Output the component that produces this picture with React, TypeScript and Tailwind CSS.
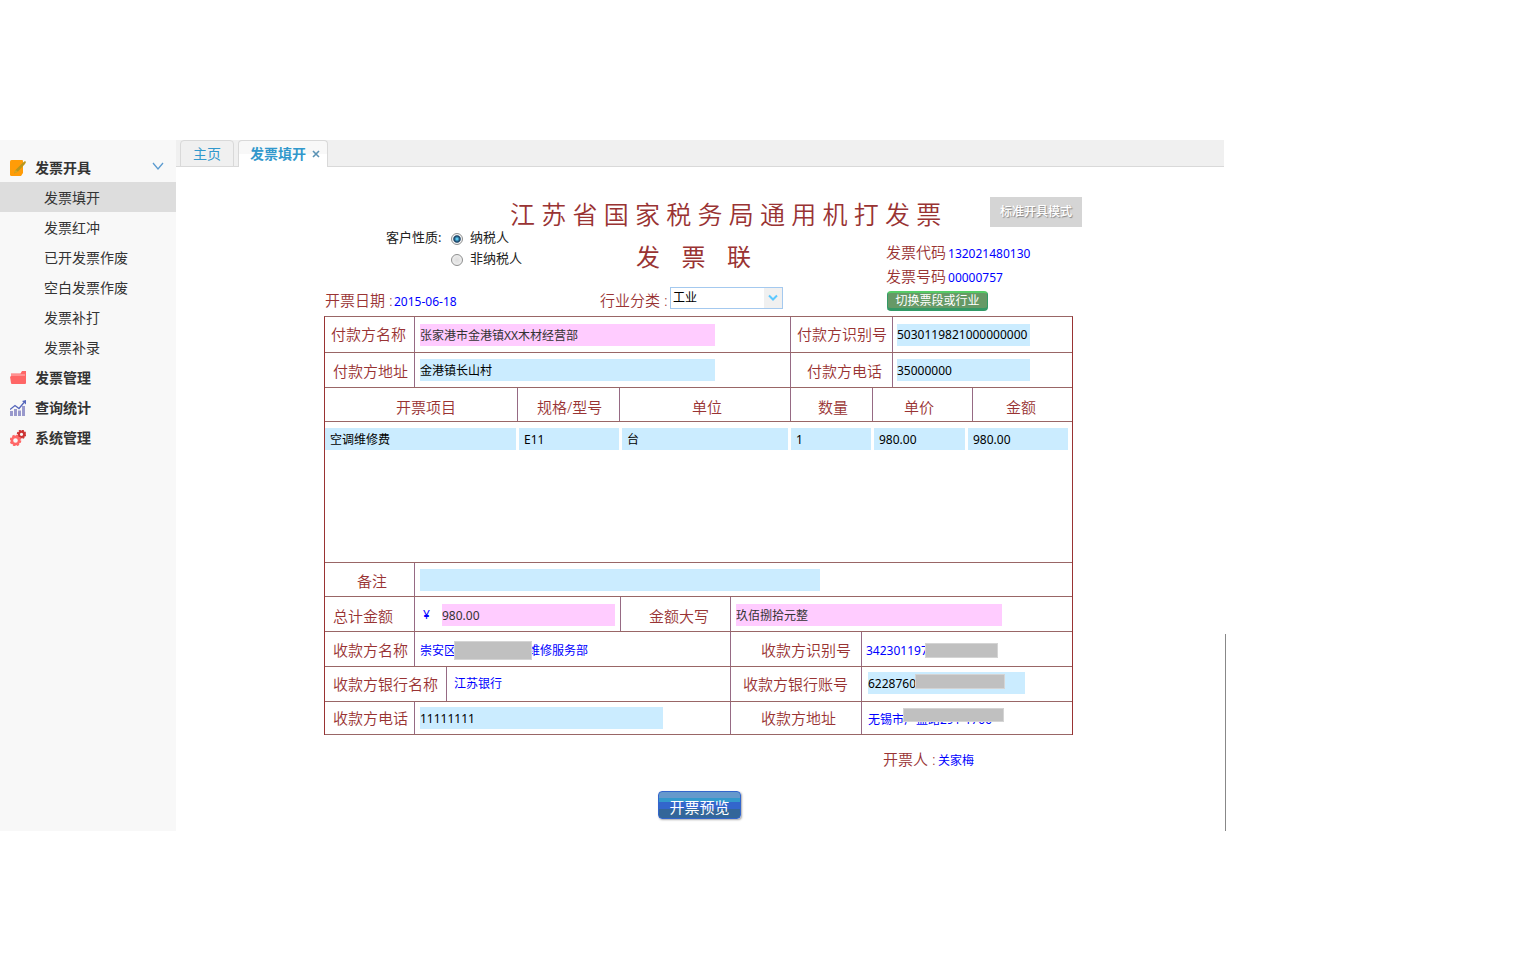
import type { ReactNode } from "react";

type FieldProps = {
  id: string;
  label: string;
  value: string;
  className: string;
  readOnly?: boolean;
};

const subItems = ["发票填开", "发票红冲", "已开发票作废", "空白发票作废", "发票补打", "发票补录"];

const columns = [
  { title: "开票项目", value: "空调维修费", head: "w-[193px] pl-[71px]", body: "w-[191px]" },
  { title: "规格/型号", value: "E11", head: "w-[102px] pl-[19px]", body: "w-[100px]" },
  { title: "单位", value: "台", head: "w-[171px] pl-[72px]", body: "w-[166px]" },
  { title: "数量", value: "1", head: "w-[82px] pl-[27px]", body: "w-[80px]" },
  { title: "单价", value: "980.00", head: "w-[100px] pl-[31px]", body: "w-[91px]" },
  { title: "金额", value: "980.00", head: "flex-1 border-r-0 pl-[33px]", body: "w-[100px]" },
];

function EditIcon() {
  return (
    <svg className="h-4 w-4" viewBox="0 0 16 16">
      <path d="M0 1.500Q0 0 1.500 0H12q1 0 1 1v12l-2 3H1.500Q0 16 0 14.500Z" fill="#ff9c08" />
      <path d="M4 13.500 5.500 10 13 2.500 15 1l1 1-1 2-7 7.500Z" fill="#b8961c" />
      <path d="m4 13.500 1.500-3.500L8 11.500Z" fill="#d9a520" />
    </svg>
  );
}

function FolderIcon() {
  return (
    <svg className="h-4 w-4" viewBox="0 0 16 16">
      <path d="M1 5V3.500h9.500L12 1h4v6H1Z" fill="#f66" />
      <path d="M1 5h14" stroke="#fbb" strokeWidth="1" />
      <path d="M0 6.500h16V13q0 1-1 1H2q-1 0-1-1Z" fill="#f66" />
    </svg>
  );
}

function ChartIcon() {
  return (
    <svg className="h-4 w-4" viewBox="0 0 16 16">
      <path d="M0 11h3v5H0ZM4 9h3v7H4ZM8 10.500h3V16H8ZM12 6h3v10h-3Z" fill="#99c" />
      <path d="m0 9.500 5-4 4 3 5-6" fill="none" stroke="#56b" strokeWidth="1.300" />
      <path d="M12 1 16 0v4.500Z" fill="#56b" />
    </svg>
  );
}

function GearsIcon() {
  return (
    <svg className="h-4 w-4" viewBox="0 0 16 16" fill="none">
      <circle cx="11.500" cy="4.300" r="2.700" stroke="#c33" strokeWidth="2.200" />
      <circle cx="11.500" cy="4.300" r="4" stroke="#c33" strokeWidth="1.400" strokeDasharray="1.900 1.240" />
      <circle cx="5.500" cy="10.500" r="3.600" fill="#f8f8f8" stroke="#f66" strokeWidth="2.600" />
      <circle cx="5.500" cy="10.500" r="5" stroke="#f66" strokeWidth="1.600" strokeDasharray="2.300 1.630" />
    </svg>
  );
}

function MenuHeading({ icon, children, open }: { icon: ReactNode; children: ReactNode; open?: boolean }) {
  return (
    <button className="flex h-[30px] w-full items-center pt-[2px] pr-3 pl-[10px] text-sm font-bold text-[#333]" type="button">
      {icon}
      <span className="ml-[9px]">{children}</span>
      {open && (
        <svg className="ml-auto h-3 w-3" viewBox="0 0 12 12" fill="none">
          <path d="m1 1 5 6 5-6" stroke="#5b9bd0" strokeWidth="1.300" />
        </svg>
      )}
    </button>
  );
}

function Field({ id, label, value, className, readOnly }: FieldProps) {
  return (
    <input
      aria-label={label}
      className={`h-[22px] text-xs ${readOnly ? "bg-[#fcf] text-[#333]" : "bg-[#cbecff] text-black"} ${className}`}
      defaultValue={value}
      id={id}
      readOnly={readOnly}
      type="text"
    />
  );
}

function Label({ htmlFor, className, children }: { htmlFor?: string; className: string; children: ReactNode }) {
  return (
    <label
      className={`flex shrink-0 items-center border-r border-[#966a84] text-[15px] font-[350] whitespace-nowrap text-[#933] ${className}`}
      htmlFor={htmlFor}
    >
      {children}
    </label>
  );
}

function Cell({ className, children }: { className: string; children: ReactNode }) {
  return <div className={`flex items-center border-[#966a84] text-xs text-[#00f] ${className}`}>{children}</div>;
}

function Row({ className, children }: { className: string; children: ReactNode }) {
  return <div className={`flex border-b border-[#966] ${className}`}>{children}</div>;
}

function Mask({ className }: { className: string }) {
  return <span className={`absolute border border-[#d4d4d4] bg-[#c0c0c0] ${className}`} />;
}

function Sidebar() {
  return (
    <nav className="w-[176px] shrink-0 bg-[#f8f8f8] pt-3">
      <MenuHeading icon={<EditIcon />} open>发票开具</MenuHeading>
      <ul>
        {subItems.map((item, index) => (
          <li key={item}>
            <a
              className={`flex h-[30px] items-center pt-[2px] pl-11 text-sm text-[#333] ${index === 0 ? "bg-[#ddd]" : ""}`}
              href="#"
            >
              {item}
            </a>
          </li>
        ))}
      </ul>
      <MenuHeading icon={<FolderIcon />}>发票管理</MenuHeading>
      <MenuHeading icon={<ChartIcon />}>查询统计</MenuHeading>
      <MenuHeading icon={<GearsIcon />}>系统管理</MenuHeading>
    </nav>
  );
}

function TabBar() {
  return (
    <div className="flex h-[27px] gap-1 border-b border-[#d9d9d9] bg-[#f0f0f0] pl-1 text-sm text-[#3298cc]">
      <button className="h-[27px] w-[54px] rounded-t border border-[#d9d9d9] bg-[#f0f0f0]" type="button">
        主页
      </button>
      <button
        className="flex h-[27px] w-[90px] items-center justify-center gap-[6px] rounded-t border border-b-0 border-[#d9d9d9] bg-linear-to-b from-[#f8f8f8] from-50% to-white to-50% pl-1 font-bold"
        type="button"
      >
        发票填开
        <svg className="h-2 w-2" viewBox="0 0 8 8">
          <path d="m1 1 6 6M7 1 1 7" stroke="#5b93b5" strokeWidth="1.600" />
        </svg>
      </button>
    </div>
  );
}

function CustomerRadio({ label, checked }: { label: string; checked?: boolean }) {
  return (
    <label className="flex h-[21px] items-center gap-[7px]">
      <input
        className="mt-[3px] h-3 w-3 appearance-none rounded-full border border-[#8e8f8f] bg-radial from-[#ddd] to-[#f4f4f4] checked:from-[#5cc8f0] checked:from-10% checked:via-[#123a5c] checked:via-45% checked:to-[#f4f4f4] checked:to-60%"
        defaultChecked={checked}
        name="customer"
        type="radio"
      />
      {label}
    </label>
  );
}

function InvoiceHeader() {
  return (
    <header className="w-[758px]">
      <div className="flex h-[30px] items-center justify-between pl-[186px]">
        <h1 className="mt-2 font-['Liberation_Serif','Noto_Sans_CJK_SC',serif] text-[25px] leading-[30px] font-[350] whitespace-nowrap text-[#933]">
          江 苏 省 国 家 税 务 局 通 用 机 打 发 票
        </h1>
        <button
          className="h-[30px] w-[92px] bg-[#d5d5d5] text-xs font-medium text-white [text-shadow:1px_1px_1px_#888]"
          type="button"
        >
          标准开具模式
        </button>
      </div>
      <div className="flex h-[89px]">
        <div className="w-[562px]">
          <div className="flex h-[60px] pl-[62px] text-[13px] text-[#222]">
            <span className="w-[65px] leading-[21px]">客户性质:</span>
            <div className="w-[185px]">
              <CustomerRadio checked label="纳税人" />
              <CustomerRadio label="非纳税人" />
            </div>
            <h2 className="font-['Noto_Sans_CJK_SC',sans-serif] text-2xl leading-[58px] whitespace-pre text-[#933]">
              发    票    联
            </h2>
          </div>
          <div className="flex">
            <p className="flex w-[276px] items-baseline pl-px leading-[26px] whitespace-nowrap">
              <span className="w-[69px] text-[15px] font-[350] text-[#933]">开票日期 :</span>
              <span className="text-xs text-[#00f]">2015-06-18</span>
            </p>
            <label
              className="w-[70px] text-[15px] leading-[26px] font-[350] whitespace-nowrap text-[#933]"
              htmlFor="industry"
            >
              行业分类 :
            </label>
            <div className="relative h-[22px] w-[113px]">
              <select
                className="block h-full w-full appearance-none border border-[#a4c9ef] bg-white pl-[2px] text-xs text-black"
                defaultValue="工业"
                id="industry"
              >
                <option>工业</option>
              </select>
              <span className="pointer-events-none absolute inset-y-px right-px flex w-[18px] items-center justify-center bg-[#f0f0f0]">
                <svg className="h-2 w-[10px]" viewBox="0 0 10 8" fill="none">
                  <path d="m1 1.500 4 4 4-4" stroke="#5cc8ff" strokeWidth="2" />
                </svg>
              </span>
            </div>
          </div>
        </div>
        <div className="pt-[13px]">
          <p className="flex h-6 items-baseline gap-[2px] leading-6">
            <span className="text-[15px] font-[350] text-[#933]">发票代码</span>
            <span className="text-xs text-[#00f]">132021480130</span>
          </p>
          <p className="flex h-6 items-baseline gap-[2px] leading-6">
            <span className="text-[15px] font-[350] text-[#933]">发票号码</span>
            <span className="text-xs text-[#00f]">00000757</span>
          </p>
          <button
            className="mt-[3px] ml-px block h-5 w-[101px] rounded border border-t-2 border-b-[3px] border-[#396] border-t-[#5c6] bg-[#696] text-xs leading-[15px] text-white"
            type="button"
          >
            切换票段或行业
          </button>
        </div>
      </div>
    </header>
  );
}

function ItemTable() {
  return (
    <table className="block border-b border-[#966]">
      <thead className="block">
        <tr className="flex h-[34px] border-b border-[#966]">
          {columns.map((column) => (
            <th
              className={`border-r border-[#966a84] text-left text-[15px] leading-[38px] font-[350] whitespace-nowrap text-[#933] ${column.head}`}
              key={column.title}
              scope="col"
            >
              {column.title}
            </th>
          ))}
        </tr>
      </thead>
      <tbody className="block h-[140px] pt-[6px]">
        <tr className="flex gap-[3px]">
          {columns.map((column) => (
            <td className={`flex ${column.body}`} key={column.title}>
              <Field className="w-full pl-[5px]" id={`item-${column.title}`} label={column.title} value={column.value} />
            </td>
          ))}
        </tr>
      </tbody>
    </table>
  );
}

function InvoiceForm() {
  return (
    <div className="w-[749px] border-x border-t border-x-[#933] border-t-[#966]">
      <Row className="h-9">
        <Label className="w-[90px] pl-[6px]" htmlFor="payer-name">付款方名称</Label>
        <Cell className="w-[376px] border-r pl-[5px]">
          <Field className="w-[295px]" id="payer-name" label="付款方名称" readOnly value="张家港市金港镇XX木材经营部" />
        </Cell>
        <Label className="w-[102px] pl-[6px]" htmlFor="payer-id">付款方识别号</Label>
        <Cell className="flex-1 pl-1">
          <Field className="w-[133px]" id="payer-id" label="付款方识别号" value="5030119821000000000" />
        </Cell>
      </Row>
      <Row className="h-[35px]">
        <Label className="w-[90px] pt-[2px] pl-2" htmlFor="payer-address">付款方地址</Label>
        <Cell className="w-[376px] border-r pl-[5px]">
          <Field className="w-[295px]" id="payer-address" label="付款方地址" value="金港镇长山村" />
        </Cell>
        <Label className="w-[102px] pt-[2px] pl-4" htmlFor="payer-phone">付款方电话</Label>
        <Cell className="flex-1 pl-1">
          <Field className="w-[133px]" id="payer-phone" label="付款方电话" value="35000000" />
        </Cell>
      </Row>
      <ItemTable />
      <Row className="h-[34px]">
        <Label className="w-[90px] pt-1 pl-8" htmlFor="remark">备注</Label>
        <Cell className="flex-1 pl-[5px]">
          <Field className="w-[400px]" id="remark" label="备注" value="" />
        </Cell>
      </Row>
      <Row className="h-[35px]">
        <Label className="w-[90px] pt-1 pl-2" htmlFor="total">总计金额</Label>
        <Cell className="w-[206px] border-r pt-[2px] pl-2">
          <span className="w-[19px]">¥</span>
          <Field className="w-[173px]" id="total" label="总计金额" readOnly value="980.00" />
        </Cell>
        <Label className="w-[110px] pt-1 pl-7" htmlFor="total-words">金额大写</Label>
        <Cell className="flex-1 pt-[2px] pl-[5px]">
          <Field className="w-[266px]" id="total-words" label="金额大写" readOnly value="玖佰捌拾元整" />
        </Cell>
      </Row>
      <Row className="h-[35px]">
        <Label className="w-[90px] pt-[2px] pl-2">收款方名称</Label>
        <Cell className="w-[316px] border-r pt-[3px] pl-[5px]">
          <span>崇安区</span>
          <span className="relative h-[19px] w-[72px]">
            <Mask className="inset-y-0 -left-[2px] w-[78px]" />
          </span>
          <span>维修服务部</span>
        </Cell>
        <Label className="w-[131px] pt-[2px] pl-[30px]">收款方识别号</Label>
        <Cell className="flex-1 pt-[3px] pl-1">
          <span className="relative">
            342301197
            <Mask className="top-0 left-[59px] h-[15px] w-[73px]" />
          </span>
        </Cell>
      </Row>
      <Row className="h-[35px]">
        <Label className="w-[122px] pl-2">收款方银行名称</Label>
        <Cell className="w-[284px] border-r pl-[7px]">江苏银行</Cell>
        <Label className="w-[131px] pl-3" htmlFor="bank-account">收款方银行账号</Label>
        <Cell className="flex-1 pb-[2px] pl-[6px]">
          <span className="relative flex">
            <Field className="w-[157px]" id="bank-account" label="收款方银行账号" value="6228760" />
            <Mask className="top-[2px] left-[47px] h-[15px] w-[90px]" />
          </span>
        </Cell>
      </Row>
      <Row className="h-[33px]">
        <Label className="w-[90px] pl-2" htmlFor="payee-phone">收款方电话</Label>
        <Cell className="w-[316px] border-r pl-[5px]">
          <Field className="w-[243px]" id="payee-phone" label="收款方电话" value="11111111" />
        </Cell>
        <Label className="w-[131px] pl-[30px]">收款方地址</Label>
        <Cell className="flex-1 pt-1 pl-[6px]">
          <span className="relative">
            无锡市广益路291-1706
            <Mask className="-top-1 left-[35px] h-[14px] w-[101px]" />
          </span>
        </Cell>
      </Row>
    </div>
  );
}

export default function App() {
  return (
    <div className="min-h-screen bg-white pt-[140px] font-['Noto_Sans','Noto_Sans_CJK_SC',sans-serif] text-black">
      <div className="flex max-w-[1226px]">
        <Sidebar />
        <main className="min-w-0 flex-1">
          <TabBar />
          <section className="pt-[30px] pb-3 pl-[148px]">
            <InvoiceHeader />
            <InvoiceForm />
            <p className="flex items-baseline pt-3 pl-[559px] leading-6 whitespace-nowrap">
              <span className="w-[55px] text-[15px] font-[350] text-[#933]">开票人 :</span>
              <span className="text-xs text-[#00f]">关家梅</span>
            </p>
            <button
              className="mt-5 ml-[334px] block h-7 w-[83px] rounded border border-[#36c] bg-[linear-gradient(#69c_0_6px,#39c_6px_10px,#36c_10px_17px,#369_17px)] pt-1 text-[15px] leading-5 text-white shadow-[1px_1px_2px_#aaa]"
              type="button"
            >
              开票预览
            </button>
          </section>
        </main>
        <div className="ml-px h-[197px] w-px self-end bg-[#888]" />
      </div>
    </div>
  );
}
